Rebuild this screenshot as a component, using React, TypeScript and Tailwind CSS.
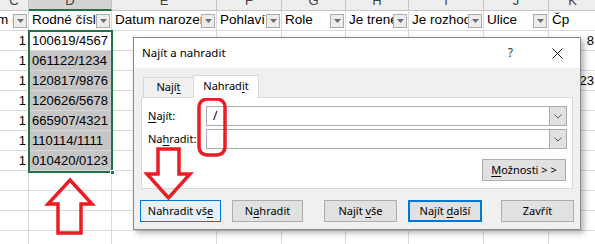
import type { ReactNode } from "react";

type Col = { key: string; w: number; head: string };

const cols: Col[] = [
  { key: "C", w: 29, head: "m (" },
  { key: "D", w: 83, head: "Rodné číslo" },
  { key: "E", w: 105, head: "Datum narození" },
  { key: "F", w: 65, head: "Pohlaví" },
  { key: "G", w: 64, head: "Role" },
  { key: "H", w: 63, head: "Je trenér" },
  { key: "I", w: 75, head: "Je rozhodčí" },
  { key: "J", w: 65, head: "Ulice" },
  { key: "K", w: 48, head: "Čp" },
];

const ids = [
  "100619/4567",
  "061122/1234",
  "120817/9876",
  "120626/5678",
  "665907/4321",
  "110114/1111",
  "010420/0123",
];

const kValues: Record<number, string> = { 0: "8", 2: "23" };

const FilterButton = () => (
  <div className="flex h-[14px] w-[14px] shrink-0 items-center justify-center border border-[#ababab] bg-[#ececec]">
    <svg width="7" height="4" viewBox="0 0 7 4">
      <path d="M0 0h7L3.5 4z" fill="#6b6b6b" />
    </svg>
  </div>
);

const Chevron = () => (
  <div className="flex h-full w-[17px] items-center justify-center border-l border-[#ababab] bg-[#e1e1e1]">
    <svg width="8" height="5" viewBox="0 0 8 5">
      <path d="M0.5 0.5L4 4L7.5 0.5" fill="none" stroke="#606060" strokeWidth="1" />
    </svg>
  </div>
);

const U = ({ children }: { children: ReactNode }) => (
  <span className="underline decoration-1 underline-offset-2">{children}</span>
);

const DlgButton = ({
  w,
  children,
  variant = "plain",
}: {
  w: string;
  children: ReactNode;
  variant?: "plain" | "default" | "focus";
}) => {
  const look =
    variant === "default"
      ? "border border-[#0078d7] bg-[#e5f1fb]"
      : variant === "focus"
        ? "border-2 border-[#0078d7] bg-[#e1e1e1]"
        : "border border-[#adadad] bg-[#e1e1e1]";
  return (
    <div className={`flex h-[22px] shrink-0 items-center justify-center text-black ${w} ${look}`}>
      <span className="whitespace-pre">{children}</span>
    </div>
  );
};

function Sheet() {
  return (
    <div className="flex flex-col font-['Liberation_Sans',sans-serif]">
      {/* column letters */}
      <div className="flex h-[11px]">
        {cols.map((c) => (
          <div
            key={c.key}
            style={{ width: c.w }}
            className={`shrink-0 overflow-hidden border-r border-[#c6c6c6] ${
              c.key === "D"
                ? "border-b-2 border-b-[#217346] bg-[#d3d3d3]"
                : "border-b border-b-[#c6c6c6] bg-[#eeeeee]"
            }`}
          >
            <div className="-mt-[6px] text-center text-[13px] leading-[13px] text-[#444]">{c.key}</div>
          </div>
        ))}
      </div>
      {/* header row */}
      <div className="flex h-[20px]">
        {cols.map((c) => (
          <div
            key={c.key}
            style={{ width: c.w }}
            className="flex shrink-0 items-center overflow-hidden border-r border-b border-[#d9d9d9] pr-[1px]"
          >
            <span
              className={`min-w-0 flex-1 overflow-hidden whitespace-nowrap text-[13.5px] text-black ${
                c.key === "C" ? "-ml-[3px]" : "pl-[3px]"
              }`}
            >
              {c.head}
            </span>
            {c.key !== "K" && <FilterButton />}
          </div>
        ))}
      </div>
      {/* data rows */}
      {Array.from({ length: 11 }).map((_, r) => (
        <div key={r} className="flex h-[20px]">
          {cols.map((c) => {
            const selected = c.key === "D" && r > 0 && r < 7;
            let text = "";
            if (r < 7) {
              if (c.key === "C") text = "1";
              if (c.key === "D") text = ids[r];
              if (c.key === "K") text = kValues[r] ?? "";
            }
            return (
              <div
                key={c.key}
                style={{ width: c.w }}
                className={`flex shrink-0 items-center overflow-hidden whitespace-nowrap border-r border-b border-[#d9d9d9] text-[13px] text-black ${
                  selected ? "bg-[#c6c6c6]" : "bg-white"
                } ${c.key === "C" || c.key === "K" ? "justify-end pr-[2px]" : "pl-[3px]"}`}
              >
                {text}
              </div>
            );
          })}
        </div>
      ))}
    </div>
  );
}

function FindReplaceDialog() {
  return (
    <div className="absolute left-[133px] top-[37px] flex h-[193px] w-[448px] flex-col border border-[#8a8a8a] bg-[#f0f0f0] font-['Noto_Sans',sans-serif] text-[11px] text-black shadow-[3px_3px_6px_rgba(0,0,0,0.3)]">
      <div className="flex h-[30px] shrink-0 items-center bg-white pl-[8px]">
        <span className="flex-1 text-[11.5px]">Najít a nahradit</span>
        <span className="mr-[39px] text-[12px] text-[#333]">?</span>
        <svg width="11" height="11" viewBox="0 0 11 11" className="mr-[17px]">
          <path d="M0.5 0.5L10.5 10.5M10.5 0.5L0.5 10.5" stroke="#222" strokeWidth="1" />
        </svg>
      </div>
      <div className="flex flex-1 flex-col">
        {/* tabs */}
        <div className="ml-[9px] mt-[7px] flex items-end">
          <div className="flex h-[20px] w-[50px] items-center justify-center border-l border-t border-[#d9d9d9]">
            <span>
              Nají<U>t</U>
            </span>
          </div>
          <div className="relative z-10 -mb-px flex h-[23px] w-[66px] items-center justify-center border-x border-t border-[#d9d9d9] bg-white pb-[2px]">
            <span>
              Nahrad<U>i</U>t
            </span>
          </div>
        </div>
        {/* panel */}
        <div className="ml-[7px] flex h-[92px] w-[432px] flex-col border border-[#d9d9d9] bg-white pt-[8px]">
          <div className="flex h-[20px] items-center">
            <span className="w-[64px] pl-[6px]">
              <U>N</U>ajít:
            </span>
            <div className="flex h-[20px] w-[361px] items-center border border-[#ababab]">
              <span className="flex-1 pl-[6px] text-[12px]">/</span>
              <Chevron />
            </div>
          </div>
          <div className="mt-[3px] flex h-[20px] items-center">
            <span className="w-[64px] pl-[6px]">
              Na<U>h</U>radit:
            </span>
            <div className="flex h-[20px] w-[361px] items-center border border-[#ababab]">
              <span className="flex-1" />
              <Chevron />
            </div>
          </div>
          <div className="mr-[6px] mt-[10px] self-end">
            <DlgButton w="w-[84px]">
              <U>M</U>ožnosti &gt; &gt;
            </DlgButton>
          </div>
        </div>
        {/* buttons */}
        <div className="ml-[6px] mt-[11px] flex">
          <DlgButton w="w-[81px]" variant="default">
            Nahradit vš<U>e</U>
          </DlgButton>
          <div className="ml-[11px]">
            <DlgButton w="w-[71px]">
              N<U>a</U>hradit
            </DlgButton>
          </div>
          <div className="ml-[21px]">
            <DlgButton w="w-[73px]">
              Najít <U>v</U>še
            </DlgButton>
          </div>
          <div className="ml-[11px]">
            <DlgButton w="w-[74px]" variant="focus">
              Najít <U>d</U>alší
            </DlgButton>
          </div>
          <div className="ml-[19px]">
            <DlgButton w="w-[73px]">Zavřít</DlgButton>
          </div>
        </div>
      </div>
    </div>
  );
}

export default function App() {
  return (
    <div className="relative h-[244px] w-[595px] overflow-hidden bg-white">
      <Sheet />
      {/* selection outline over D2:D8 */}
      <div className="pointer-events-none absolute left-[28px] top-[30px] h-[143px] w-[85px] border-2 border-[#217346]" />
      <div className="absolute left-[110px] top-[170px] h-[5px] w-[5px] border border-white bg-[#217346]" />
      <FindReplaceDialog />
      {/* red annotations */}
      <svg className="pointer-events-none absolute left-0 top-0" width="595" height="244" viewBox="0 0 595 244">
        <rect x="199" y="99" width="26" height="56" rx="8" fill="none" stroke="#ec1c24" strokeWidth="3.5" />
        <path
          d="M70 180 L92 204 L81 204 L81 233 L58 233 L58 204 L48 204 Z"
          fill="none"
          stroke="#ec1c24"
          strokeWidth="3.5"
          strokeLinejoin="miter"
        />
        <path
          d="M158 149 L179 149 L179 174 L190 174 L168.5 198 L147 174 L158 174 Z"
          fill="none"
          stroke="#ec1c24"
          strokeWidth="3.5"
          strokeLinejoin="miter"
        />
      </svg>
    </div>
  );
}
